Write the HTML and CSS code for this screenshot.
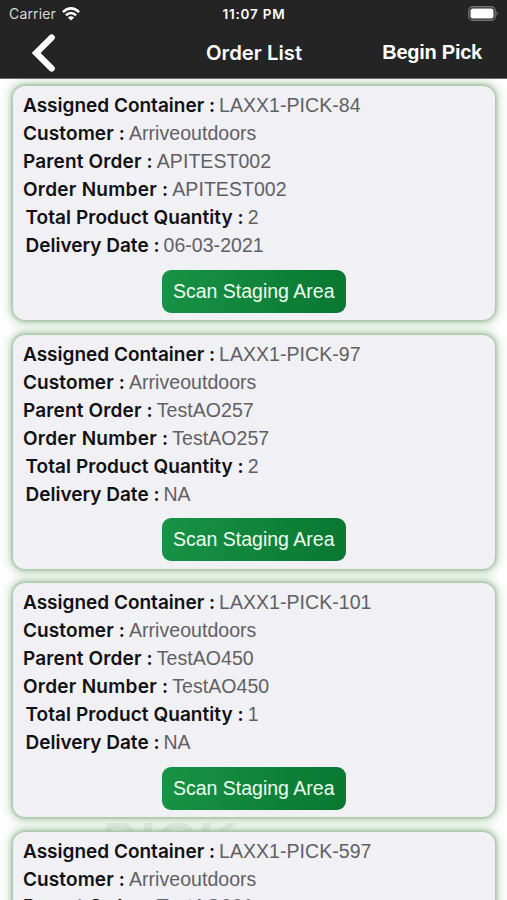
FILE: index.html
```html
<!DOCTYPE html>
<html lang="en">
<head>
<meta charset="utf-8">
<title>Order List</title>
<link rel="stylesheet" href="styles.css">
</head>
<body>
<header class="header">
  <div class="status">
    <div class="carrier"><span>Carrier</span>
      <svg class="wifi" viewBox="0 0 18 14"><g fill="none" stroke="#fff" stroke-width="2.5"><path d="M.9 5.1Q9-2.4 17.1 5.1"/><path d="M3.9 8.3Q9 3.7 14.1 8.3"/></g><path d="M5.9 10.5Q9 7.9 12.1 10.5L9 13.6Z" fill="#fff"/></svg>
    </div>
    <div class="clock">11:07 PM</div>
    <svg class="battery" viewBox="0 0 31 15"><rect x=".8" y=".8" width="26.4" height="13.4" rx="4" fill="none" stroke="#737373" stroke-width="1.4"/><rect x="2.5" y="2.5" width="23" height="10" rx="2.3" fill="#fff"/><path d="M28.5 5Q31 7.5 28.5 10Z" fill="#737373"/></svg>
  </div>
  <nav class="nav">
    <svg class="back" viewBox="0 0 24 38"><path d="M19.7 3.5 4.2 19 19.7 34.5" fill="none" stroke="#fff" stroke-width="6.2" stroke-linecap="round" stroke-linejoin="miter"/></svg>
    <h1 class="title">Order List</h1>
    <span class="action">Begin Pick</span>
  </nav>
</header>
<main class="list">
  <div class="watermark">PICK</div>
  <article class="card">
    <p class="row"><b class="assigned">Assigned Container :</b><span>LAXX1-PICK-84</span></p>
    <p class="row"><b class="customer">Customer :</b><span>Arriveoutdoors</span></p>
    <p class="row"><b class="parent">Parent Order :</b><span>APITEST002</span></p>
    <p class="row"><b class="number">Order Number :</b><span>APITEST002</span></p>
    <p class="row inset"><b class="quantity">Total Product Quantity :</b><span>2</span></p>
    <p class="row inset"><b>Delivery Date :</b><span>06-03-2021</span></p>
    <button class="scan">Scan Staging Area</button>
  </article>
  <article class="card">
    <p class="row"><b class="assigned">Assigned Container :</b><span>LAXX1-PICK-97</span></p>
    <p class="row"><b class="customer">Customer :</b><span>Arriveoutdoors</span></p>
    <p class="row"><b class="parent">Parent Order :</b><span>TestAO257</span></p>
    <p class="row"><b class="number">Order Number :</b><span>TestAO257</span></p>
    <p class="row inset"><b class="quantity">Total Product Quantity :</b><span>2</span></p>
    <p class="row inset"><b>Delivery Date :</b><span>NA</span></p>
    <button class="scan">Scan Staging Area</button>
  </article>
  <article class="card">
    <p class="row"><b class="assigned">Assigned Container :</b><span>LAXX1-PICK-101</span></p>
    <p class="row"><b class="customer">Customer :</b><span>Arriveoutdoors</span></p>
    <p class="row"><b class="parent">Parent Order :</b><span>TestAO450</span></p>
    <p class="row"><b class="number">Order Number :</b><span>TestAO450</span></p>
    <p class="row inset"><b class="quantity">Total Product Quantity :</b><span>1</span></p>
    <p class="row inset"><b>Delivery Date :</b><span>NA</span></p>
    <button class="scan">Scan Staging Area</button>
  </article>
  <article class="card">
    <p class="row"><b class="assigned">Assigned Container :</b><span>LAXX1-PICK-597</span></p>
    <p class="row tight"><b class="customer">Customer :</b><span>Arriveoutdoors</span></p>
    <p class="row"><b class="parent">Parent Order :</b><span>TestAO001</span></p>
  </article>
</main>
</body>
</html>
```
FILE: styles.css
```css
* { box-sizing: border-box; }
body {
  margin: 0;
  height: 900px;
  overflow: hidden;
  background: #fff;
  font-family: Inter, "Liberation Sans", sans-serif;
  display: flex;
  flex-direction: column;
}
.header {
  height: 79px;
  flex: none;
  background: #242424;
  border-bottom: 1px solid #6c6c6c;
  color: #fff;
}
.status {
  height: 27px;
  padding: 0 8px 0 9px;
  display: grid;
  grid-template-columns: 1fr auto 1fr;
  align-items: center;
}
.carrier {
  display: flex;
  align-items: center;
  gap: 6px;
  font-size: 14px;
  letter-spacing: .15px;
  color: #d8d8d8;
}
.wifi { width: 18px; height: 14px; }
.clock { font-size: 13.5px; font-weight: 600; letter-spacing: .8px; }
.battery { width: 31px; height: 15px; justify-self: end; }
.nav {
  height: 51px;
  padding: 0 25px 0 32px;
  display: grid;
  grid-template-columns: 1fr 98px 1fr;
  align-items: center;
}
.back { width: 24px; height: 38px; }
.title {
  margin: 0 0 0 -2px;
  font-size: 20.3px;
  font-weight: 600;
  letter-spacing: 0;
  white-space: nowrap;
}
.action { justify-self: end; font: bold 20px "Liberation Sans", sans-serif; letter-spacing: -.25px; }
.list {
  position: relative;
  z-index: 0;
  flex: 1;
  min-height: 0;
  overflow: hidden;
  padding: 7px 12.5px 0 13px;
}
.watermark {
  position: absolute;
  z-index: 3;
  left: 99px;
  top: 739px;
  height: 13px;
  overflow: hidden;
  padding-right: 6px;
  font: italic bold 54px/46px "Liberation Sans", sans-serif;
  letter-spacing: 2px;
  color: rgba(60, 90, 60, .08);
}
.card {
  position: relative;
  z-index: 2;
  height: 234px;
  margin-bottom: 14.5px;
  padding: 5px 10px 0;
  border-radius: 12px;
  background: #f1f0f5;
  box-shadow: 0 0 4px 1px rgba(66, 120, 66, .5), 0 0 10px 5px rgba(66, 140, 66, .22);
  display: flex;
  flex-direction: column;
}
.row {
  margin: 0;
  height: 28px;
  flex: none;
  display: flex;
  align-items: baseline;
  gap: 4px;
  line-height: 28px;
  font-size: 19.5px;
  color: #606064;
  white-space: nowrap;
}
.row b { font-weight: 600; font-size: 19px; color: #111114; }
.row span { font-family: "Liberation Sans", sans-serif; letter-spacing: .05px; }
.row .customer { letter-spacing: .1px; }
.row .parent { letter-spacing: .15px; }
.row .number { letter-spacing: .25px; }
.row .quantity { letter-spacing: .06px; }
.inset { padding-left: 2.5px; }
.tight { height: 27px; }
.scan {
  align-self: center;
  width: 184px;
  height: 43px;
  margin-top: 10.5px;
  flex: none;
  padding: 0;
  border: 0;
  border-radius: 9px;
  background: linear-gradient(100deg, #189346, #087731);
  color: #effff1;
  font: 19.5px "Liberation Sans", sans-serif;
}
```
